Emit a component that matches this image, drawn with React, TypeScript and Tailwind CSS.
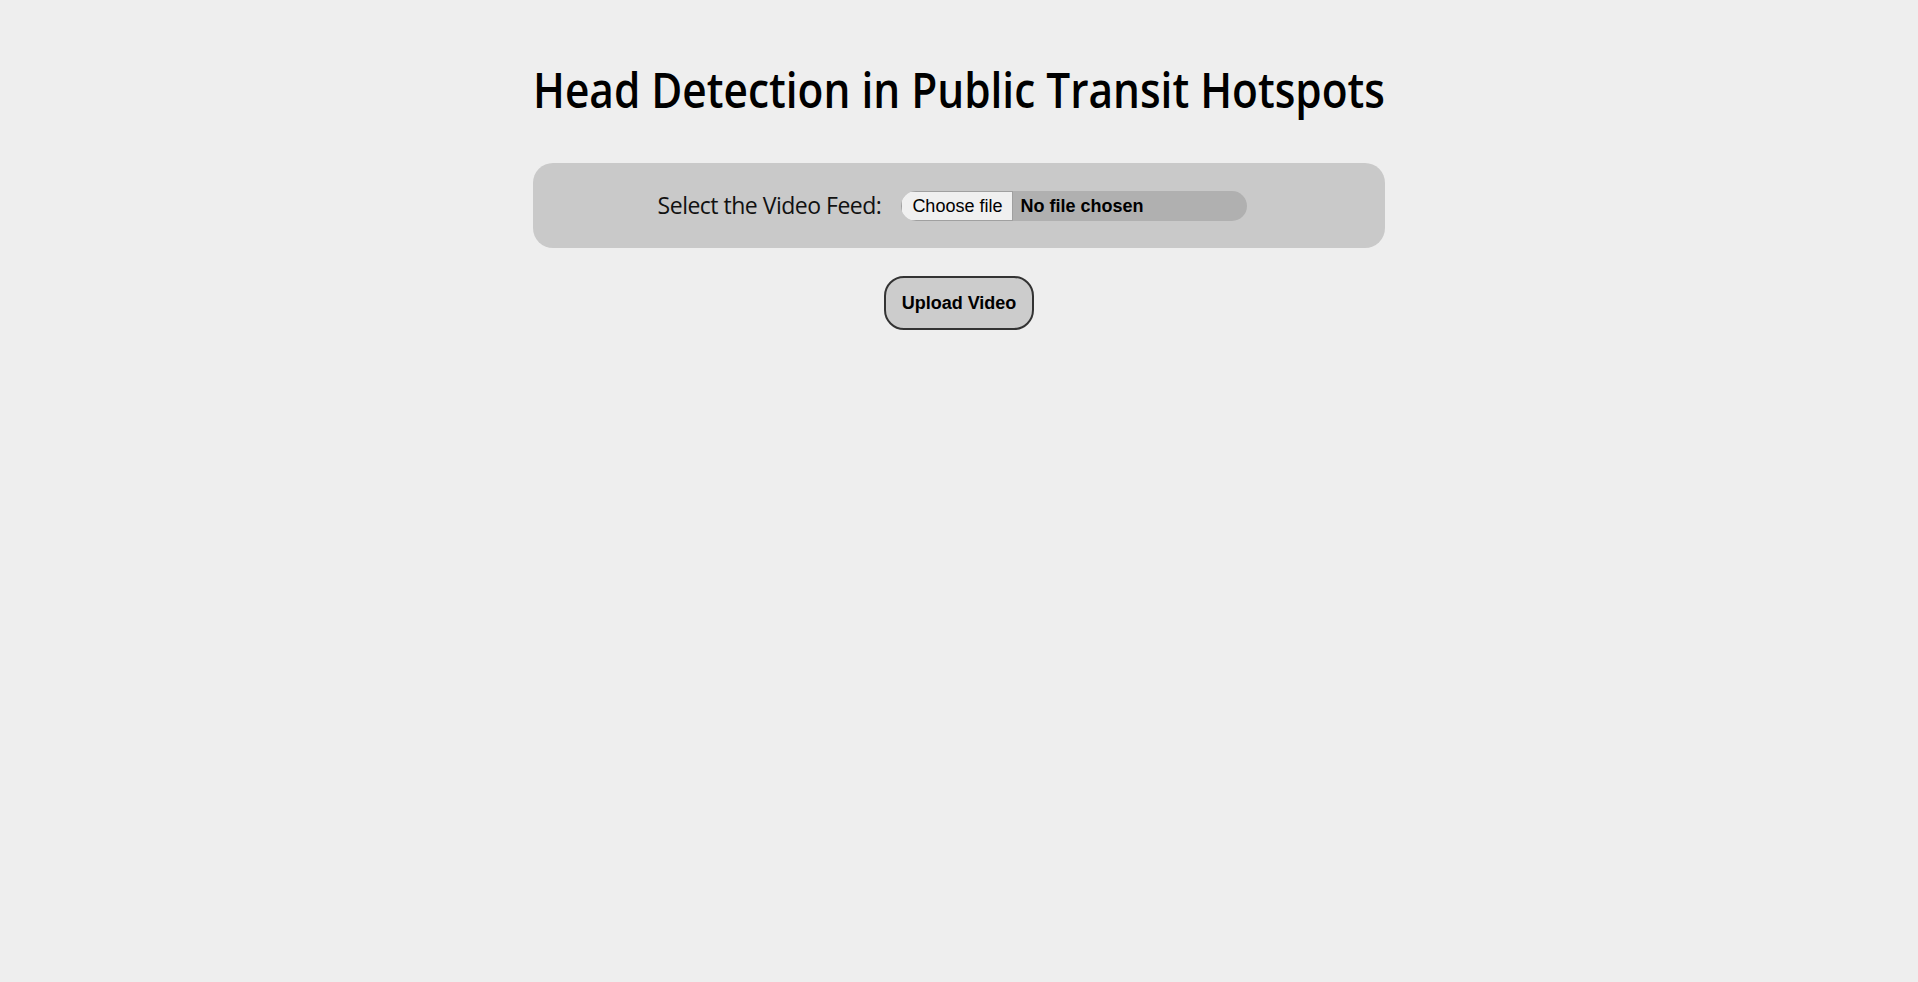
import { useState } from 'react';

export default function App() {
  const [fileName, setFileName] = useState('');

  return (
    <div className="min-h-screen bg-[#eeeeee] font-['Liberation_Sans',Arial,sans-serif] text-black">
      <h1 className="scale-x-[0.883] pt-[57px] text-center font-['Open_Sans',sans-serif] text-[48px] font-semibold leading-[65px]">
        Head Detection in Public Transit Hotspots
      </h1>

      <form className="flex flex-col items-center" onSubmit={(e) => e.preventDefault()}>
        <div className="mt-[41px] flex h-[85px] w-[852px] items-center justify-center rounded-[20px] bg-[#c9c9c9] pr-[13px]">
          <span className="mr-[20px] pb-[2px] font-['Open_Sans',sans-serif] text-[23px] leading-[30px] tracking-[-0.5px] text-[#111]">
            Select the Video Feed:
          </span>
          <label
            htmlFor="video"
            className="flex h-[30px] w-[346px] cursor-pointer items-stretch overflow-hidden rounded-full bg-[#b0b0b0] text-[18px] leading-none"
          >
            <span className="flex items-center border border-[#a0a0a0] bg-[#f0f0f0] px-[10px] text-black">
              Choose file
            </span>
            <span className="ml-[7px] flex items-center truncate font-bold">
              {fileName || 'No file chosen'}
            </span>
            <input
              id="video"
              type="file"
              accept="video/*"
              className="hidden"
              onChange={(e) => setFileName(e.target.files?.[0]?.name ?? '')}
            />
          </label>
        </div>

        <button
          type="submit"
          className="mt-[28px] h-[54px] rounded-[20px] border-2 border-[#333] bg-[#cccccc] px-[16px] text-[18px] font-bold"
        >
          Upload Video
        </button>
      </form>
    </div>
  );
}
